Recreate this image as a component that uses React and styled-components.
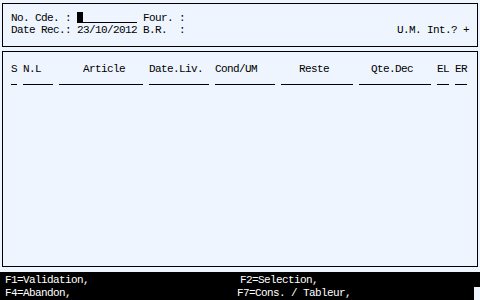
import React from "react";
import styled, { createGlobalStyle } from "styled-components";

const CH = 6;

const GlobalStyle = createGlobalStyle`
  html, body {
    margin: 0;
    padding: 0;
    background: #eef5fe;
  }
`;

const columns = [
  { label: "S", width: 1, indent: 0 },
  { label: "N.L", width: 5, indent: 0 },
  { label: "Article", width: 14, indent: 4 },
  { label: "Date.Liv.", width: 10, indent: 0 },
  { label: "Cond/UM", width: 10, indent: 0 },
  { label: "Reste", width: 12, indent: 3 },
  { label: "Qte.Dec", width: 12, indent: 2 },
  { label: "EL", width: 2, indent: 0 },
  { label: "ER", width: 2, indent: 0 },
];

const App = () => {
  return (
    <Screen>
      <GlobalStyle />
      <Panel>
        <HeadBox>
          <Line>
            <Text>{"No. Cde. : "}</Text>
            <Field>
              <Cursor />
            </Field>
            <Text>{" Four. :"}</Text>
          </Line>
          <Line>
            <Text>{"Date Rec.: 23/10/2012 B.R.  :"}</Text>
            <Spacer />
            <Text>{"U.M. Int.? +"}</Text>
          </Line>
        </HeadBox>
        <GridBox>
          <HeaderRow>
            {columns.map(col => (
              <Col key={col.label} width={col.width}>
                <Label indent={col.indent}>{col.label}</Label>
                <Rule />
              </Col>
            ))}
          </HeaderRow>
        </GridBox>
      </Panel>
      <Keys>
        <KeyLine first>
          <Key first>F1=Validation,</Key>
          <Key>F2=Selection,</Key>
        </KeyLine>
        <KeyLine last>
          <Key first>F4=Abandon,</Key>
          <Key>F7=Cons. / Tableur,</Key>
        </KeyLine>
      </Keys>
    </Screen>
  );
};

const Screen = styled.div`
  width: 480px;
  height: 300px;
  display: flex;
  flex-direction: column;
  font-family: "Liberation Mono", "DejaVu Sans Mono", monospace;
  font-size: 11px;
  letter-spacing: -0.6px;
  color: #000;
  background: #eef5fe;
`;

const Panel = styled.div`
  flex: 1;
  display: flex;
  flex-direction: column;
  gap: 4px;
  padding: 3px 2px 5px 2px;
`;

const HeadBox = styled.div`
  height: 44px;
  box-sizing: border-box;
  border: 1px solid #000;
  padding: 8px 8px 0 8px;
`;

const Line = styled.div`
  display: flex;
  align-items: flex-end;
  height: 12px;
  line-height: 12px;
  white-space: pre;
`;

const Text = styled.span`
  white-space: pre;
`;

const Spacer = styled.span`
  flex: 1;
`;

const Field = styled.span`
  display: inline-flex;
  align-items: flex-end;
  width: ${CH * 10}px;
  height: 11px;
  box-sizing: border-box;
  border-bottom: 1px solid #000;
  margin-bottom: 1px;
`;

const Cursor = styled.span`
  width: ${CH}px;
  height: 10px;
  background: #000;
`;

const GridBox = styled.div`
  flex: 1;
  border: 1px solid #000;
  padding: 11px 8px 0 8px;
`;

const HeaderRow = styled.div`
  display: flex;
  gap: ${CH}px;
`;

const Col = styled.div`
  width: ${props => props.width * CH}px;
  display: flex;
  flex-direction: column;
`;

const Label = styled.div`
  height: 12px;
  line-height: 12px;
  padding-left: ${props => props.indent * CH}px;
  white-space: pre;
`;

const Rule = styled.div`
  margin-top: 9px;
  height: 1px;
  background: #000;
`;

const Keys = styled.div`
  height: 28px;
  display: flex;
  flex-direction: column;
`;

const KeyLine = styled.div`
  display: flex;
  height: ${props => (props.first ? 15 : 13)}px;
  padding-top: ${props => (props.first ? 2 : 0)}px;
  box-sizing: border-box;
  line-height: 13px;
  margin-right: ${props => (props.last ? CH : 0)}px;
  background: #000;
`;

const Key = styled.span`
  width: ${props => (props.first ? 235 : 240)}px;
  padding-left: ${props => (props.first ? 5 : 0)}px;
  color: #fff;
  white-space: pre;
`;

export default App;
